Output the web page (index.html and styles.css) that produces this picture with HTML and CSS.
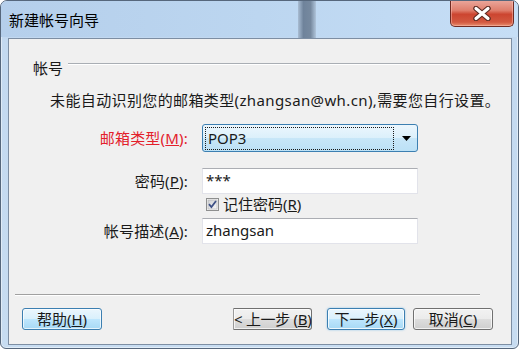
FILE: index.html
```html
<!DOCTYPE html>
<html lang="zh-CN">
<head>
<meta charset="utf-8">
<title>新建帐号向导</title>
<link rel="stylesheet" href="styles.css">
</head>
<body>
<div class="window">
  <div class="titlebar">
    <span class="title">新建帐号向导</span>
    <div class="glass-smear"></div>
    <div class="close">
      <svg width="20" height="15" viewBox="0 0 20 15">
        <path d="M4 2.5 L16 12.5 M16 2.5 L4 12.5" stroke="#5b2a22" stroke-width="5.5" stroke-linecap="round" fill="none"/>
        <path d="M4 2.5 L16 12.5 M16 2.5 L4 12.5" stroke="#ffffff" stroke-width="3.2" stroke-linecap="round" fill="none"/>
      </svg>
    </div>
  </div>
  <div class="client">
    <div class="content">
      <div class="group-head"><span class="group-label">帐号</span><div class="rule"></div></div>
      <p class="desc">未能自动识别您的邮箱类型(zhangsan@wh.cn),需要您自行设置。</p>
      <div class="row row-type">
        <span class="lbl red">邮箱类型(<u>M</u>):</span>
        <div class="combo">
          <span class="combo-val">POP3</span>
          <span class="combo-btn">
            <svg width="9" height="5" viewBox="0 0 9 5"><path d="M0 0 H9 L4.5 5 Z" fill="#000"/></svg>
          </span>
        </div>
      </div>
      <div class="row row-pass">
        <span class="lbl">密码(<u>P</u>):</span>
        <div class="input">***</div>
      </div>
      <div class="row row-check">
        <span class="lbl"></span>
        <span class="check">
          <svg class="box" width="13" height="13" viewBox="0 0 13 13">
            <defs>
              <linearGradient id="cb" x1="0" y1="0" x2="1" y2="1">
                <stop offset="0" stop-color="#cfd1d4"/>
                <stop offset="1" stop-color="#f7f7f7"/>
              </linearGradient>
            </defs>
            <rect x="0.5" y="0.5" width="12" height="12" fill="#f4f4f4" stroke="#8e8f8f"/>
            <rect x="2" y="2" width="9" height="9" fill="url(#cb)" stroke="#aeb0b3" stroke-width="0.6"/>
            <path d="M3 6.2 L5.4 9 L10 3" stroke="#3e5186" stroke-width="1.8" fill="none"/>
          </svg>
          <span>记住密码(<u>R</u>)</span>
        </span>
      </div>
      <div class="row row-desc">
        <span class="lbl">帐号描述(<u>A</u>):</span>
        <div class="input">zhangsan</div>
      </div>
    </div>
    <div class="sep"></div>
    <div class="buttons">
      <div class="btn hot">帮助(<u>H</u>)</div>
      <div class="btn clipped">&lt; 上一步 (<u>B</u>)</div>
      <div class="btn hot default">下一步(<u>X</u>)</div>
      <div class="btn">取消(<u>C</u>)</div>
    </div>
  </div>
</div>
</body>
</html>
```

FILE: styles.css
```css
html, body {
  margin: 0;
  padding: 0;
  background: #ffffff;
}

body {
  font-family: "Noto Sans", "Noto Sans CJK SC", sans-serif;
  font-size: 15px;
  color: #1a1a1a;
}

.window {
  box-sizing: border-box;
  width: 519px;
  height: 349px;
  border: 1px solid #56677c;
  border-radius: 7px 7px 6px 6px;
  background: linear-gradient(to bottom, #b9d2ed 0px, #c3d9f0 40px, #c7dcf1 100%);
  display: flex;
  flex-direction: column;
  overflow: hidden;
  box-shadow: inset 0 0 0 1px rgba(255, 255, 255, 0.45);
}

.titlebar {
  position: relative;
  height: 36px;
  display: flex;
  align-items: center;
  padding-left: 8px;
  background: linear-gradient(to right, #b5cfeb 0%, #bcd6f0 50%, #c6def6 100%);
}

.title {
  font-family: "Noto Sans CJK SC", sans-serif;
  font-size: 15px;
  line-height: 20px;
  color: #000;
  margin-top: 1px;
}

.glass-smear {
  position: absolute;
  z-index: 1;
  display: block;
  left: 297px;
  top: 0;
  width: 18px;
  height: 37px;
  background-color: #7d90a6;
  background-image: linear-gradient(to right, #a9bdd3 0%, #6f839b 30%, #76899f 70%, #b0c5db 100%);
}

.close {
  position: absolute;
  z-index: 2;
  right: 4px;
  top: -1px;
  width: 64px;
  height: 27px;
  box-sizing: border-box;
  border: 1px solid #6e2a22;
  border-top: none;
  border-radius: 0 0 5px 5px;
  background: linear-gradient(to bottom, #eba99e 0%, #df7e6c 40%, #cc4530 55%, #d25840 85%, #e88e6e 100%);
  box-shadow: inset 0 0 0 1px rgba(255, 200, 190, 0.45);
  display: flex;
  align-items: center;
  justify-content: center;
}

.client {
  flex: 1;
  margin: 1px 6px 3px 7px;
  border: 1px solid #7d8ea3;
  background: #f0f0f0;
  display: flex;
  flex-direction: column;
}

.content {
  padding: 19px 21px 0 24px;
}

.group-head {
  display: flex;
  align-items: flex-start;
  height: 20px;
}

.group-label {
  font-family: "Noto Sans CJK SC", sans-serif;
  line-height: 20px;
}

.rule {
  flex: 1;
  margin-top: 5px;
  margin-left: 5px;
  height: 1px;
  background: #a9aeb4;
  box-shadow: 0 1px 0 #ffffff;
}

.desc {
  margin: 12px 0 0 17px;
  line-height: 20px;
  white-space: nowrap;
  letter-spacing: 0.38px;
}

.row {
  display: grid;
  grid-template-columns: 155px 216px;
  column-gap: 14px;
  align-items: center;
}

.lbl {
  text-align: right;
  line-height: 20px;
  white-space: nowrap;
  letter-spacing: 0.2px;
}

.red {
  color: #e3202b;
}

.row-type {
  margin-top: 14px;
}

.row-pass {
  margin-top: 16px;
}

.row-check {
  height: 20px;
}

.row-desc {
  margin-top: 4px;
}

.combo {
  box-sizing: border-box;
  height: 28px;
  border: 1px solid #3c7fb1;
  border-radius: 3px;
  background: linear-gradient(to bottom, #ecf6fd 0%, #dcf0fb 48%, #c7e6f8 52%, #bce1f6 100%);
  display: flex;
  align-items: center;
  padding: 1px 0 1px 2px;
}

.combo-val {
  box-sizing: border-box;
  width: 189px;
  height: 23px;
  border: 1px dotted #1a1a1a;
  line-height: 21px;
  padding-left: 2px;
}

.combo-btn {
  flex: 1;
  display: flex;
  align-items: center;
  justify-content: center;
  padding-left: 2px;
}

.input {
  box-sizing: border-box;
  height: 26px;
  background: #ffffff;
  border: 1px solid #e2e3ea;
  border-top-color: #abadb3;
  line-height: 23px;
  padding-left: 3px;
}

.check {
  display: flex;
  align-items: center;
  gap: 4px;
  padding-left: 4px;
  line-height: 20px;
}

.box {
  display: block;
  flex: none;
}

.sep {
  margin: 50px 31px 0 6px;
  height: 1px;
  background: #a0a0a0;
  box-shadow: 0 1px 0 #ffffff;
}

.buttons {
  display: flex;
  align-items: center;
  margin-top: 13px;
  padding: 0 18px 0 13px;
}

.btn {
  box-sizing: border-box;
  width: 80px;
  height: 22px;
  border: 1px solid #707070;
  border-radius: 3px;
  background: linear-gradient(to bottom, #f2f2f2 0%, #ebebeb 50%, #dddddd 51%, #cfcfcf 100%);
  box-shadow: inset 0 0 0 1px rgba(255, 255, 255, 0.7);
  text-align: center;
  line-height: 21px;
  white-space: nowrap;
  overflow: hidden;
  color: #1a1a1a;
}

.btn.hot {
  border-color: #3c7fb1;
  background: linear-gradient(to bottom, #eaf6fd 0%, #d9f0fc 50%, #bee6fd 51%, #a7d9f5 100%);
}

.btn.default {
  width: 78px;
  margin-left: 15px;
  box-shadow: inset 0 0 0 1px rgba(255, 255, 255, 0.8), 0 0 2px rgba(60, 160, 230, 0.6);
}

.btn.clipped {
  width: 79px;
  margin-left: auto;
  text-align: left;
  padding-left: 0;
  overflow: visible;
  letter-spacing: -0.3px;
  border-left-color: #9a9a9a;
  border-radius: 0 3px 3px 0;
}

.btn:last-child {
  margin-left: 8px;
}
```
